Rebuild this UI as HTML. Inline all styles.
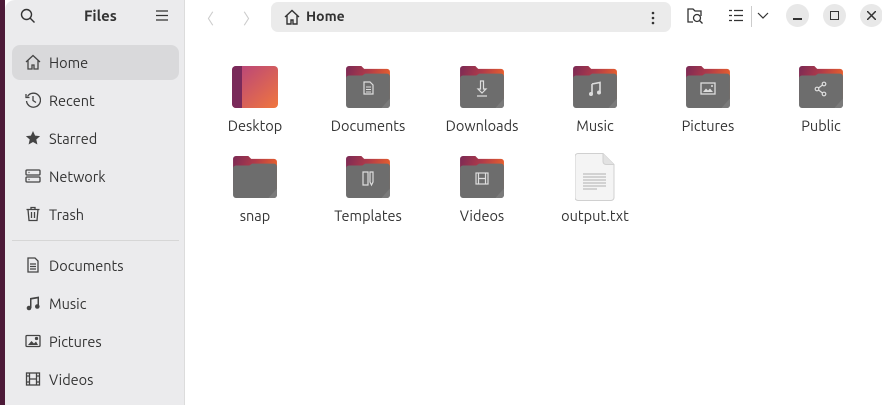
<!DOCTYPE html>
<html><head><meta charset="utf-8"><style>
*{margin:0;padding:0;box-sizing:border-box}
body{width:882px;height:405px;overflow:hidden;background:#fff;font-family:"Ubuntu","Liberation Sans",sans-serif;color:#333;position:relative}
.strip{position:absolute;left:0;top:0;width:5px;height:405px;background:#4d1a38}
.side{position:absolute;left:5px;top:0;width:180px;height:405px;background:#ebebed;border-right:1px solid #dcdcdc;border-top-left-radius:10px}
.title{position:absolute;left:79px;top:7px;font-weight:bold;font-size:15px;color:#333}
.item{position:absolute;left:7px;width:167px;height:35px;border-radius:8px;font-size:14.5px;color:#333;line-height:35px;padding-left:37px}
.item svg{position:absolute;left:13px;top:9px}
.sel{background:#d9d9db}
.sep{position:absolute;left:7px;top:240px;width:167px;height:1px;background:#d6d6d6}
.path{position:absolute;left:271px;top:2px;width:400px;height:30px;background:#ebebeb;border-radius:7px}
.path span{position:absolute;left:35px;top:6px;font-weight:bold;font-size:14px;color:#333}
.wb{position:absolute;top:4px;width:23px;height:23px;border-radius:50%;background:#e8e8e8}
.f{position:absolute;width:110px;text-align:center;font-size:14.5px;color:#333}
.f svg{display:block;margin:0 auto 9px}
</style></head><body>
<svg width="0" height="0" style="position:absolute">
<defs>
<linearGradient id="tg" x1="0" y1="0" x2="1" y2="0.3"><stop offset="0" stop-color="#7a2a55"/><stop offset="0.5" stop-color="#b03a4a"/><stop offset="1" stop-color="#e8602c"/></linearGradient>
<linearGradient id="dg" x1="0" y1="0" x2="1" y2="1"><stop offset="0" stop-color="#b5427e"/><stop offset="1" stop-color="#f0763e"/></linearGradient>
<symbol id="fold" viewBox="0 0 46 44"><path d="M3 0h13l3 3h24a3 3 0 0 1 3 3v30H0V3a3 3 0 0 1 3-3z" fill="url(#tg)"/><path d="M3 10h14l3-2h23a3 3 0 0 1 3 3v30a3 3 0 0 1-3 3H3a3 3 0 0 1-3-3V13a3 3 0 0 1 3-3z" fill="#6d6d6d"/><path d="M46 34l-9 10h6a3 3 0 0 0 3-3z" fill="#7a7a7a"/></symbol>
</defs></svg>
<div class="strip"></div>
<div class="side">
<svg style="position:absolute;left:15px;top:8px" width="16" height="16" viewBox="0 0 16 16" fill="none" stroke="#333" stroke-width="1.4"><circle cx="6.5" cy="6.5" r="5"/><path d="M10 10l4.5 4.5"/></svg>
<div class="title">Files</div>
<svg style="position:absolute;left:151px;top:10px" width="12" height="11" viewBox="0 0 12 11" stroke="#333" stroke-width="1.2"><path d="M0 1h12M0 5.5h12M0 10h12"/></svg>
<div class="item sel" style="top:45px"><svg width="16" height="16" viewBox="0 0 16 16" fill="none" stroke="#444" stroke-width="1.3"><path d="M1 8L8 1.5 15 8M3 6.5V15h4v-4h2v4h4V6.5"/></svg>Home</div>
<div class="item" style="top:83px"><svg width="16" height="16" viewBox="0 0 16 16" fill="none" stroke="#444" stroke-width="1.3"><path d="M2.5 4.5A7 7 0 1 1 1.5 9"/><path d="M1 2v3.5h3.5M8 4v4.5l3 2"/></svg>Recent</div>
<div class="item" style="top:121px"><svg width="16" height="16" viewBox="0 0 16 16"><path d="M8 1l2.1 4.6 5 .5-3.8 3.4 1.1 5L8 12l-4.4 2.5 1.1-5L.9 6.1l5-.5z" fill="#444"/></svg>Starred</div>
<div class="item" style="top:159px"><svg width="16" height="16" viewBox="0 0 16 16" fill="none" stroke="#444" stroke-width="1.3"><rect x="1" y="2" width="14" height="5" rx="1"/><rect x="1" y="9" width="14" height="5" rx="1"/><path d="M3.5 4.5h1M3.5 11.5h1"/></svg>Network</div>
<div class="item" style="top:197px"><svg width="16" height="16" viewBox="0 0 16 16" fill="none" stroke="#444" stroke-width="1.3"><path d="M1.5 3.5h13M6 3.5V1.5h4v2M3 3.5l1 11h8l1-11M6.5 6v6M9.5 6v6"/></svg>Trash</div>
<div class="sep"></div>
<div class="item" style="top:248px"><svg width="16" height="16" viewBox="0 0 16 16" fill="none" stroke="#444" stroke-width="1.3"><path d="M3 1h7l3 3v11H3zM5 7h6M5 9.5h6M5 12h6"/></svg>Documents</div>
<div class="item" style="top:286px"><svg width="16" height="16" viewBox="0 0 16 16" fill="#444"><path d="M5 3l9-1.5v10h-1.5V3.5L6.5 4.5V13H5z"/><circle cx="4" cy="13" r="2.3"/><circle cx="12.3" cy="11.5" r="2.3"/></svg>Music</div>
<div class="item" style="top:324px"><svg width="16" height="16" viewBox="0 0 16 16" fill="none" stroke="#444" stroke-width="1.3"><rect x="1" y="2.5" width="14" height="11" rx="1"/><path d="M3 12l3.5-4 2.5 2.5 2-2 2 3.5z" fill="#444" stroke="none"/><circle cx="11.5" cy="5.5" r="1" fill="#444"/></svg>Pictures</div>
<div class="item" style="top:362px"><svg width="16" height="16" viewBox="0 0 16 16" fill="none" stroke="#444" stroke-width="1.3"><rect x="1.5" y="2" width="13" height="12"/><path d="M4.5 2v12M11.5 2v12M4.5 8h7M1.5 5h3M1.5 11h3M11.5 5h3M11.5 11h3"/></svg>Videos</div>
</div>
<div style="position:absolute;left:199px;top:8px;color:#ccc;font-size:15px">〈</div>
<div style="position:absolute;left:243px;top:8px;color:#ccc;font-size:15px">〉</div>
<div class="path"><svg style="position:absolute;left:13px;top:7px" width="16" height="16" viewBox="0 0 16 16" fill="none" stroke="#333" stroke-width="1.4"><path d="M1 8L8 1.5 15 8M3 6.5V15h4v-4h2v4h4V6.5"/></svg><span>Home</span>
<svg style="position:absolute;left:380px;top:9px" width="4" height="14"><circle cx="2" cy="2" r="1.3" fill="#333"/><circle cx="2" cy="7" r="1.3" fill="#333"/><circle cx="2" cy="12" r="1.3" fill="#333"/></svg></div>
<svg style="position:absolute;left:686px;top:7px" width="18" height="17" viewBox="0 0 18 17" fill="none" stroke="#333" stroke-width="1.3"><path d="M7 15H2V2h5l2 2h6v5"/><circle cx="11" cy="11" r="3.5"/><path d="M13.5 13.5l3 3"/></svg>
<svg style="position:absolute;left:729px;top:9px" width="14" height="13" viewBox="0 0 14 13" stroke="#333" stroke-width="1.2" fill="none"><path d="M0 1.5h3M0 6.5h3M0 11.5h3M5 1.5h9M5 6.5h9M5 11.5h9"/></svg>
<div style="position:absolute;left:751px;top:6px;width:1px;height:21px;background:#ccc"></div>
<svg style="position:absolute;left:757px;top:12px" width="12" height="7" fill="none" stroke="#333" stroke-width="1.2"><path d="M1 1l5 5 5-5"/></svg>
<div class="wb" style="left:786px"><div style="position:absolute;left:7px;top:14px;width:9px;height:1.5px;background:#333"></div></div>
<div class="wb" style="left:823px"><div style="position:absolute;left:7px;top:7px;width:9px;height:9px;border:1.4px solid #333"></div></div>
<div class="wb" style="left:860px"><svg style="position:absolute;left:7px;top:7px" width="9" height="9" stroke="#333" stroke-width="1.5"><path d="M0 0l9 9M9 0L0 9"/></svg></div>

<div class="f" style="left:200px;top:66px"><svg width="46" height="42" viewBox="0 0 46 42"><rect width="46" height="42" rx="4" fill="url(#dg)"/><path d="M4 0h6v42H4a4 4 0 0 1-4-4V4a4 4 0 0 1 4-4z" fill="#7a2a5a"/></svg>Desktop</div>
<div class="f" style="left:313px;top:66px"><svg width="46" height="42" viewBox="0 0 46 42"><use href="#fold"/><path d="M19 16h6l3 3v9h-9z" fill="none" stroke="#ddd" stroke-width="1.2"/><path d="M21 21h5M21 23.5h5M21 26h5" stroke="#ddd"/></svg>Documents</div>
<div class="f" style="left:427px;top:66px"><svg width="46" height="42" viewBox="0 0 46 42"><use href="#fold"/><path d="M21.5 15v8h-2.5l4 4 4-4h-2.5v-8zM18 30h10" fill="none" stroke="#ddd" stroke-width="1.2"/></svg>Downloads</div>
<div class="f" style="left:540px;top:66px"><svg width="46" height="42" viewBox="0 0 46 42"><use href="#fold"/><path d="M20 18l8-1.5v9M20 18v10" stroke="#ddd" stroke-width="1.6" fill="none"/><circle cx="19" cy="28" r="2" fill="#ddd"/><circle cx="27" cy="26.5" r="2" fill="#ddd"/></svg>Music</div>
<div class="f" style="left:653px;top:66px"><svg width="46" height="42" viewBox="0 0 46 42"><use href="#fold"/><rect x="16" y="17" width="14" height="11" fill="none" stroke="#ddd" stroke-width="1.3"/><path d="M18 26l3-3.5 2 2 2-2 3 3.5z" fill="#ddd"/><circle cx="27" cy="20" r="1" fill="#ddd"/></svg>Pictures</div>
<div class="f" style="left:766px;top:66px"><svg width="46" height="42" viewBox="0 0 46 42"><use href="#fold"/><g fill="none" stroke="#ddd" stroke-width="1.2"><circle cx="19" cy="23" r="1.8"/><circle cx="26" cy="18" r="1.8"/><circle cx="26" cy="28" r="1.8"/><path d="M20.5 22l4-3M20.5 24l4 3"/></g></svg>Public</div>

<div class="f" style="left:200px;top:156px"><svg width="46" height="42" viewBox="0 0 46 42"><use href="#fold"/></svg>snap</div>
<div class="f" style="left:313px;top:156px"><svg width="46" height="42" viewBox="0 0 46 42"><use href="#fold"/><path d="M18 16h5v13h-5zM25 16v10l1.5 3 1.5-3V16z" fill="none" stroke="#ddd" stroke-width="1.2"/></svg>Templates</div>
<div class="f" style="left:427px;top:156px"><svg width="46" height="42" viewBox="0 0 46 42"><use href="#fold"/><g fill="none" stroke="#ddd" stroke-width="1.2"><rect x="17" y="17" width="12" height="11"/><path d="M19.5 17v11M26.5 17v11M19.5 22.5h7"/></g></svg>Videos</div>
<div class="f" style="left:540px;top:153px"><svg width="40" height="48" viewBox="0 0 40 48" style="margin-bottom:6px"><path d="M3 .5h25l11 11v33a3 3 0 0 1-3 3H3a3 3 0 0 1-3-3v-41a3 3 0 0 1 3-3z" fill="#f4f4f4" stroke="#d0d0d0"/><path d="M28 .5v8a3 3 0 0 0 3 3h8" fill="#e2e2e2" stroke="#d0d0d0"/><path d="M8 21h23M8 24h23M8 27h23M8 30h23M8 33h23M8 36h14" stroke="#9a9a9a" stroke-width=".8"/></svg>output.txt</div>
</body></html>
